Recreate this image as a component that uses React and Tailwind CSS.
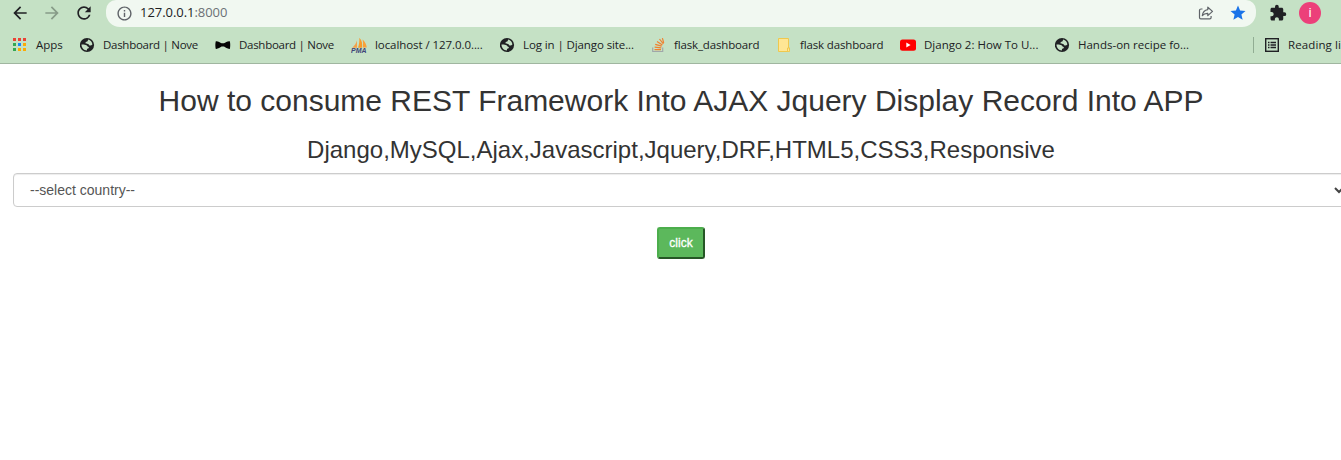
import React from 'react';
import { MdArrowBack, MdArrowForward, MdRefresh, MdInfoOutline, MdStar, MdExtension } from 'react-icons/md';

function AppsIcon() {
  const colors = ['#ea4335', '#ea4335', '#ea4335', '#34a853', '#1a87f5', '#fbab05', '#34a853', '#fbab05', '#fbab05'];
  return (
    <svg width="16" height="16" viewBox="0 0 16 16">
      {colors.map((c, i) => (
        <rect key={i} x={(i % 3) * 5} y={1 + Math.floor(i / 3) * 5} width="3" height="3" fill={c} />
      ))}
    </svg>
  );
}

function GlobeIcon() {
  return (
    <svg width="16" height="16" viewBox="0 0 16 16">
      <circle cx="7" cy="8" r="7.100" fill="#202124" />
      <path d="M8.300 2.600c2.200.6 3.900 2.500 4.100 4.900-.8 1-1.800 1.300-2.700 1-.9-.3-.7-1.400-1.700-1.600-1.100-.2-2.500.1-2.500-1.200 0-1.100 1.900-.7 2.200-1.600.2-.6.100-1.100.6-1.500z" fill="#c5e1c5" />
      <path d="M1.500 7.600c1.700-.1 3.900 0 5 .7.900.6.800 1.300 1.700 1.500 1.100.3.900 1.700-.3 1.800-1 .1-.9.900-1 1.900C3.900 13.500 1.400 11 1.500 7.600z" fill="#c5e1c5" />
    </svg>
  );
}

function BowtieIcon() {
  return (
    <svg width="16" height="16" viewBox="0 0 16 16">
      <path d="M.8 4.200C3 3.900 5 5.300 6.600 6.300h2.400C10.500 5.300 12.500 3.900 14.800 4.200c.6 2.200.6 5.500 0 7.700-2.200.2-4.200-1.300-5.800-2.300H6.600c-1.600 1-3.600 2.500-5.800 2.300-.6-2.200-.6-5.500 0-7.700z" fill="#050505" />
    </svg>
  );
}

function SailsIcon() {
  return (
    <svg width="17" height="16" viewBox="0 0 17 16">
      <path d="M6 3.500v7.200H1.200C3.200 9 5 7 6 3.500z" fill="#f2a24b" />
      <path d="M8.300 .8c3 3 3.200 6.500 2.700 9.900H7C8.200 7.500 8.600 4 8.300 .8z" fill="#f89c2c" />
      <path d="M11.600 2.500c2.500 2 3.800 5 4.200 8h-4c.4-2.500.3-5-.2-8z" fill="#f9a13a" />
      <text x="0" y="15.500" fontSize="6.500" fontWeight="700" fontStyle="italic" textLength="15.500" lengthAdjust="spacingAndGlyphs" fill="#3f4478" fontFamily="Liberation Sans, sans-serif">PMA</text>
    </svg>
  );
}

function StackIcon() {
  return (
    <svg width="16" height="16" viewBox="0 0 16 16" fill="none">
      <path d="M.7 10.500v4h10v-4" stroke="#a0a7a9" strokeWidth="1.200" />
      <path d="M2.500 12.600h6.500M2.600 10.200l6.700.7M3.200 7.300l6.500 1.900M5 4.400l5.400 3.500M7.500 2l3.900 4.900M10.400 1.200l1.300 4.600" stroke="#f0802e" strokeWidth="1.200" />
    </svg>
  );
}

function NoteIcon() {
  return (
    <svg width="16" height="16" viewBox="0 0 16 16">
      <path d="M.5 1.500h10v9.500h1v3.500H.5z" fill="#ffe694" stroke="#efc84e" />
      <path d="M9.500 14.500v-3.500h2v2.500l-1 1z" fill="#ffe694" stroke="#efc84e" />
    </svg>
  );
}

function VideoIcon() {
  return (
    <svg width="16" height="16" viewBox="0 0 16 16">
      <rect x="0" y="2.500" width="16" height="11.300" rx="2.500" fill="#f00" />
      <path d="M6.300 5.600v5l4.300-2.500z" fill="#fff" />
    </svg>
  );
}

const bookmarks = [
  { icon: <AppsIcon />, text: 'Apps', box: 'w-[67px]', gap: 'w-[23px]', label: 'tracking-[0px]' },
  { icon: <GlobeIcon />, text: 'Dashboard | Nove', box: 'w-[135px]', gap: 'w-[23px]', label: 'tracking-[-0.28px]' },
  { icon: <BowtieIcon />, text: 'Dashboard | Nove', box: 'w-[136px]', gap: 'w-[24px]', label: 'tracking-[-0.28px]' },
  { icon: <SailsIcon />, text: 'localhost / 127.0.0....', box: 'w-[149px]', gap: 'w-[24px]', label: 'tracking-[-0.07px]' },
  { icon: <GlobeIcon />, text: 'Log in | Django site...', box: 'w-[152px]', gap: 'w-[23px]', label: 'tracking-[-0.1px]' },
  { icon: <StackIcon />, text: 'flask_dashboard', box: 'w-[126px]', gap: 'w-[22px]', label: 'tracking-[-0.15px]' },
  { icon: <NoteIcon />, text: 'flask dashboard', box: 'w-[122px]', gap: 'w-[22px]', label: 'tracking-[-0.15px]' },
  { icon: <VideoIcon />, text: 'Django 2: How To U...', box: 'w-[155px]', gap: 'w-[24px]', label: 'tracking-[0px]' },
  { icon: <GlobeIcon />, text: 'Hands-on recipe fo...', box: 'w-[198px]', gap: 'w-[23px]', label: 'tracking-[0px]' },
];

export default function App() {
  return (
    <div className="h-[460px] w-full overflow-hidden bg-white font-['Liberation_Sans',Arial,sans-serif]">
      <header className="h-16 border-b border-[#a0b6a0] bg-[#c5e1c5] font-['Open_Sans',sans-serif] text-[#202124]">
        <div className="flex h-[27px] items-start">
          <div className="flex h-[26px] w-[106px] shrink-0 items-center gap-3 pl-[10px]">
            <MdArrowBack size={20} />
            <MdArrowForward size={20} className="text-[#879b88]" />
            <MdRefresh size={20} />
          </div>
          <div className="flex h-[27px] w-[1150px] shrink-0 items-center rounded-b-[14px] rounded-tl-[10px] rounded-tr-[10px] bg-[#f1f8f1] pr-[10px] pb-px pl-[10px]">
            <MdInfoOutline size={17} className="text-[#5f6368]" />
            <div className="ml-[7px] grow text-[13px] tracking-[-0.05px]">
              127.0.0.1<span className="text-[#6b7075]">:8000</span>
            </div>
            <svg width="16" height="16" viewBox="0 0 16 16" fill="none" stroke="#5f6368" strokeWidth="1.200" className="mr-[15px]">
              <path d="M4.500 4H3C2 4 1.500 4.500 1.500 5.300v7.200c0 .8.500 1.300 1.300 1.300h9c.8 0 1.300-.5 1.300-1.300V11" />
              <path d="M9.800 2.200l4.700 4.200-4.700 4.200V8.300C7.500 8.200 5.600 9 4.300 10.700 4.700 7.500 6.500 5 9.800 4.600z" strokeLinejoin="round" />
            </svg>
            <MdStar size={18} className="-mr-px text-[#1a73e8]" />
          </div>
          <div className="flex h-[26px] items-center pl-[13px]">
            <MdExtension size={18} />
            <div className="ml-3 flex size-[22px] items-center justify-center rounded-full bg-[#ec407a] font-['Roboto',sans-serif] text-[13px] text-white">i</div>
          </div>
        </div>
        <div className="flex h-9 items-center pl-[13px] text-[12px] whitespace-nowrap">
          {bookmarks.map((b, i) => (
            <div key={i} className={`flex shrink-0 items-center ${b.box}`}>
              <span className={`shrink-0 ${b.gap}`}>{b.icon}</span>
              <span className={`text-[11.5px] ${b.label}`}>{b.text}</span>
            </div>
          ))}
          <div className="h-4 w-px shrink-0 bg-[#91ad93]" />
          <svg width="14" height="14" viewBox="0 0 14 14" fill="none" stroke="#202124" className="ml-[11px] shrink-0">
            <rect x=".7" y=".7" width="12.600" height="12.600" strokeWidth="1.400" />
            <path d="M3 4.500h1.500M5.500 4.500H11M3 7h1.500M5.500 7H11M3 9.500h1.500M5.500 9.500H11" strokeWidth="1.300" />
          </svg>
          <span className="ml-[9px] text-[11.5px] tracking-[0.1px]">Reading list</span>
        </div>
      </header>
      <main className="ml-[13px] flex w-[1336px] flex-col items-center text-[#333]">
        <h2 className="mt-5 text-[30px] leading-[33px] whitespace-nowrap">How to consume REST Framework Into AJAX Jquery Display Record Into APP</h2>
        <h3 className="mt-5 text-[24px] leading-[26px] whitespace-nowrap">Django,MySQL,Ajax,Javascript,Jquery,DRF,HTML5,CSS3,Responsive</h3>
        <div className="mt-[10px] flex h-[34px] w-full items-center justify-between rounded border border-[#ccc] pr-[4px] pl-4 text-[14px] text-[#555] shadow-[inset_0_1px_1px_rgba(0,0,0,0.075)]">
          <span>--select country--</span>
          <svg width="10" height="8" viewBox="0 0 10 8" fill="none" stroke="#444" strokeWidth="2">
            <path d="M1 2l4 4 4-4" />
          </svg>
        </div>
        <button className="mt-5 h-8 w-12 rounded-[3px] border-2 border-t-[#4cae4c] border-r-[#265726] border-b-[#265726] border-l-[#4cae4c] bg-[#5cb85c] text-[12px] text-white [-webkit-text-stroke:0.3px_white]">click</button>
      </main>
    </div>
  );
}
